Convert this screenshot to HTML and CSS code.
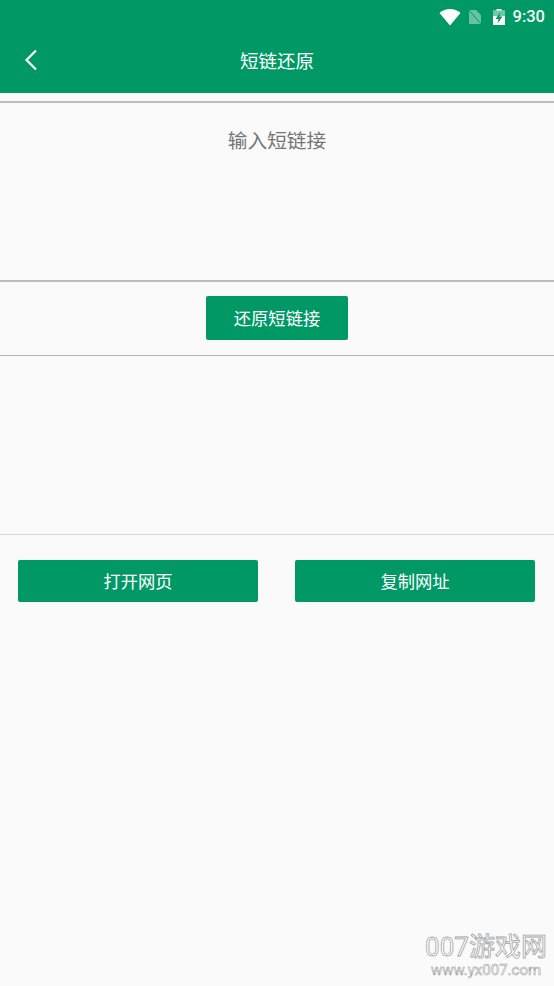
FILE: index.html
```html
<!DOCTYPE html>
<html lang="zh-CN">
<head>
    <meta charset="UTF-8">
    <title>短链还原</title>
    <link rel="stylesheet" href="styles.css">
</head>
<body>
<div class="page">
    <div class="header">
        <div class="status">
            <svg class="ico ico-wifi" width="22" height="18" viewBox="0 0 22 18"><path d="M0.500 5C3.500 2.500 7 1 11 1S18.500 2.500 21.500 5L11 17.500Z" fill="#fff"/></svg>
            <svg class="ico ico-sim" width="16" height="18" viewBox="0 0 16 18"><path d="M2 2H9L14 7V16H2Z" fill="#fff" opacity="0.4"/><path d="M1 1L15 17" stroke="#009966" stroke-width="1"/></svg>
            <svg class="ico ico-bat" width="14" height="18" viewBox="0 0 14 18"><path d="M4.500 1H9.500V2.500H13V17H1V2.500H4.500Z" fill="#fff"/><path d="M1 2.500H13V8H1Z" fill="#009966" opacity="0.55"/><path d="M8.500 4L3.500 11H6.500L5.500 15.500L10.500 8.500H7.500Z" fill="#009966"/></svg>
            <span class="time">9:30</span>
        </div>
        <div class="title-bar">
            <svg class="back" width="14" height="22" viewBox="0 0 14 22"><path d="M12 1.500L2.500 11L12 20.500" fill="none" stroke="#fff" stroke-width="2.200"/></svg>
            <span class="title">短链还原</span>
        </div>
    </div>
    <div class="input-box">输入短链接</div>
    <div class="action-row">
        <div class="btn btn-restore">还原短链接</div>
    </div>
    <div class="result-box"></div>
    <div class="btn-row">
        <div class="btn btn-wide">打开网页</div>
        <div class="btn btn-wide">复制网址</div>
    </div>
    <div class="mark">
        <div class="mark-big">007游戏网</div>
        <div class="mark-small">www.yx007.com</div>
    </div>
</div>
</body>
</html>
```
FILE: styles.css
```css
* {
    padding: 0;
    margin: 0;
    box-sizing: border-box;
}
html, body {
    height: 100%;
}
body {
    background: #fafafa;
    font-family: "Roboto", "Noto Sans CJK SC", sans-serif;
    overflow: hidden;
}
.page {
    position: relative;
    height: 986px;
    background: #fafafa;
}
.header {
    height: 93px;
    background: #009966;
    color: #fff;
}
.status {
    height: 29px;
    padding: 4px 9px 0 0;
    display: flex;
    justify-content: flex-end;
    align-items: center;
}
.ico {
    display: block;
}
.ico-wifi {
    margin-right: 6px;
}
.ico-sim {
    margin-right: 9px;
}
.ico-bat {
    margin-right: 7px;
}
.time {
    font-size: 16.500px;
    font-weight: 500;
    color: #f2faf7;
}
.title-bar {
    position: relative;
    height: 64px;
    display: flex;
    align-items: center;
    justify-content: center;
}
.back {
    position: absolute;
    left: 24px;
    top: 20px;
}
.title {
    font-size: 18.500px;
    margin-top: -2px;
}
.input-box {
    margin-top: 8px;
    height: 181px;
    border-top: 2px solid #bcbcbc;
    border-bottom: 2px solid #bcbcbc;
    padding-top: 25px;
    text-align: center;
    font-size: 19.700px;
    line-height: 28px;
    color: #757575;
}
.action-row {
    height: 74px;
    border-bottom: 1px solid #b4b4b4;
    display: flex;
    justify-content: center;
    padding-top: 14px;
}
.btn {
    background: #009966;
    color: #fff;
    border-radius: 2px;
    text-align: center;
    font-size: 17.300px;
}
.btn-restore {
    width: 142px;
    height: 44px;
    line-height: 46px;
}
.result-box {
    height: 179px;
    border-bottom: 1px solid #d8d8d8;
}
.btn-row {
    display: flex;
    justify-content: space-between;
    padding: 25px 19px 0 18px;
}
.btn-wide {
    width: 240px;
    height: 42px;
    line-height: 44px;
}
.mark {
    position: absolute;
    right: 6px;
    bottom: 8px;
    width: 124px;
    display: flex;
    flex-direction: column;
    align-items: center;
    color: #fff;
    -webkit-text-stroke: 0.8px #a4a4a4;
    line-height: 1;
}
.mark-big {
    font-size: 26px;
    white-space: nowrap;
}
.mark-small {
    font-size: 15px;
    margin-top: 3px;
    -webkit-text-stroke: 0.6px #a4a4a4;
}
```
